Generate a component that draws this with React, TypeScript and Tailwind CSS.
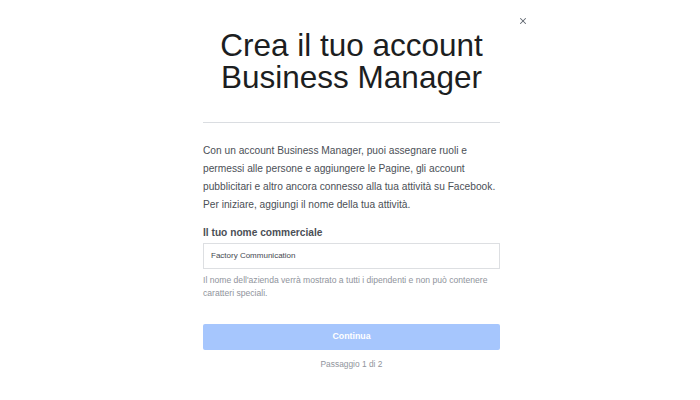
import { X } from "lucide-react"

export default function App() {
  return (
    <div className="relative w-[700px] h-[400px] bg-white font-['Liberation_Sans',Arial,sans-serif] overflow-hidden">
      {/* close */}
      <button className="absolute top-[16px] left-[518px] text-[#606770]">
        <X className="w-[10px] h-[10px]" strokeWidth={2.5} />
      </button>

      <div className="flex justify-center">
        <div className="w-[297px] ml-[3px] pt-[29px] flex flex-col">
          <h1 className="text-[31.5px] leading-[32px] text-center text-[#1c1e21]">
            Crea il tuo account
            <br />
            Business Manager
          </h1>

          <div className="mt-[29px] h-px bg-[#dadde1]" />

          <p className="mt-[19px] text-[10.2px] leading-[18px] text-[#4b4f56]">
            Con un account Business Manager, puoi assegnare ruoli e permessi alle persone e aggiungere le Pagine, gli
            account pubblicitari e altro ancora connesso alla tua attività su Facebook. Per iniziare, aggiungi il nome
            della tua attività.
          </p>

          <label className="mt-[13px] text-[10.2px] leading-[12px] font-bold text-[#4b4f56]">
            Il tuo nome commerciale
          </label>

          <div className="mt-[4px] h-[26px] border border-[#dddfe2] flex items-center pl-[7px] text-[8px] text-[#444950]">
            Factory Communication
          </div>

          <p className="mt-[5px] text-[8.6px] leading-[13px] text-[#90949c]">
            Il nome dell'azienda verrà mostrato a tutti i dipendenti e non può contenere caratteri speciali.
          </p>

          <button className="mt-[24px] h-[26px] rounded-[2px] bg-[#a6c6fd] text-white text-[8.8px] font-bold">
            Continua
          </button>

          <div className="mt-[8px] text-center text-[8.4px] leading-[12px] text-[#90949c]">Passaggio 1 di 2</div>
        </div>
      </div>
    </div>
  )
}
